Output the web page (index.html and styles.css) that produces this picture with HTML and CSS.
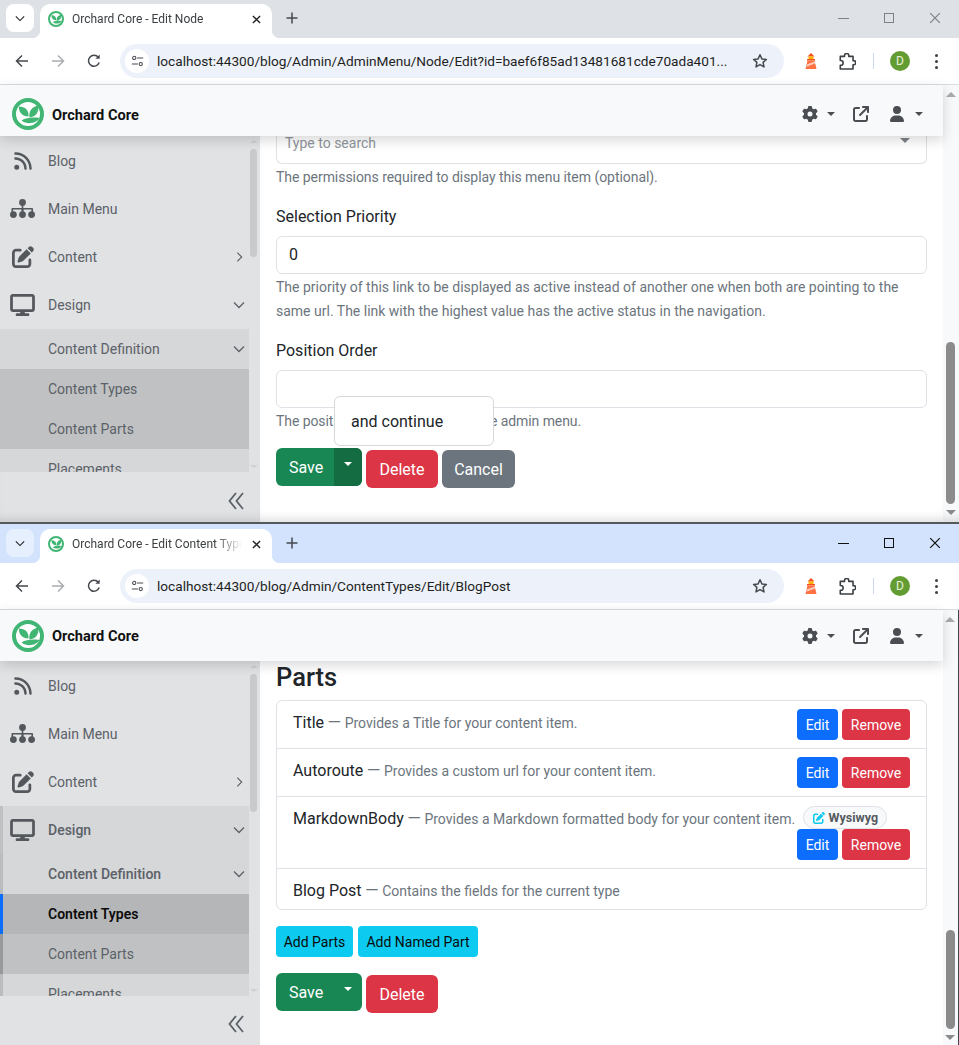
FILE: index.html
```html
<!DOCTYPE html>
<html lang="en">
<head>
<meta charset="utf-8">
<title>Orchard Core</title>
<link rel="stylesheet" href="styles.css">
</head>
<body>
<svg class="sprite" xmlns="http://www.w3.org/2000/svg">
  <symbol id="i-logo" viewBox="0 0 32 32">
    <circle cx="16" cy="16" r="14" fill="#fff" stroke="#41b574" stroke-width="4"/>
    <path fill="#41b574" d="M16.500 18.500C10 18.500 6.500 14 7 8.500c6 0 10 3.500 9.500 10z"/>
    <path fill="#41b574" d="M17.500 19.500C16.500 13 20 8.500 26.500 7.500c.5 6.500-2.500 11.500-9 12z"/>
    <path fill="#41b574" d="M9.500 22.500c4.500-3 11.500-3.500 18-2.500-3 5.500-12.500 7-18 2.500z"/>
  </symbol>
  <symbol id="i-rss" viewBox="0 0 448 512"><path d="M0 64C0 46.300 14.300 32 32 32c229.800 0 416 186.200 416 416c0 17.700-14.300 32-32 32s-32-14.300-32-32C384 253.600 226.400 96 32 96C14.300 96 0 81.700 0 64zM0 416a64 64 0 1 1 128 0A64 64 0 1 1 0 416zM32 160c159.100 0 288 128.900 288 288c0 17.700-14.300 32-32 32s-32-14.300-32-32c0-123.700-100.300-224-224-224c-17.700 0-32-14.300-32-32s14.300-32 32-32z"/></symbol>
  <symbol id="i-sitemap" viewBox="0 0 25 20">
    <circle cx="12.500" cy="3.500" r="3.400"/>
    <circle cx="3.400" cy="15.600" r="3.400"/><circle cx="12.500" cy="15.600" r="3.400"/><circle cx="21.600" cy="15.600" r="3.400"/>
    <path d="M11.700 6h1.600v3h8.700c.6 0 1 .4 1 1v3h-1.600v-2.400h-7.800V13h-2.200v-2.400H3.100V13H1.500v-3c0-.6.4-1 1-1h9.200z"/>
  </symbol>
  <symbol id="i-pen" viewBox="0 0 512 512"><path d="M471.600 21.700c-21.900-21.900-57.300-21.900-79.200 0L362.300 51.700l97.900 97.900 30.100-30.100c21.900-21.900 21.900-57.300 0-79.200L471.600 21.700zm-299.200 220c-6.100 6.100-10.800 13.600-13.500 21.900l-29.600 88.800c-2.900 8.600-.6 18.100 5.800 24.600s15.900 8.700 24.600 5.800l88.800-29.600c8.200-2.700 15.700-7.400 21.900-13.500L437.700 172.300 339.700 74.300 172.400 241.700zM96 64C43 64 0 107 0 160V416c0 53 43 96 96 96H352c53 0 96-43 96-96V320c0-17.700-14.300-32-32-32s-32 14.300-32 32v96c0 17.700-14.300 32-32 32H96c-17.700 0-32-14.300-32-32V160c0-17.700 14.300-32 32-32h96c17.700 0 32-14.300 32-32s-14.300-32-32-32H96z"/></symbol>
  <symbol id="i-desktop" viewBox="0 0 576 512"><path d="M64 0C28.700 0 0 28.700 0 64V352c0 35.300 28.700 64 64 64H240l-10.700 32H160c-17.700 0-32 14.300-32 32s14.300 32 32 32H416c17.700 0 32-14.300 32-32s-14.300-32-32-32H346.700L336 416H512c35.300 0 64-28.700 64-64V64c0-35.300-28.700-64-64-64H64zM512 64V352H64V64H512z"/></symbol>
  <symbol id="i-gear" viewBox="0 0 512 512"><path d="M495.900 166.600c3.200 8.700 .5 18.400-6.400 24.600l-43.300 39.400c1.100 8.300 1.700 16.800 1.700 25.400s-.6 17.100-1.700 25.400l43.300 39.400c6.900 6.200 9.600 15.900 6.400 24.600c-4.400 11.900-9.700 23.300-15.800 34.300l-4.700 8.100c-6.600 11-14 21.400-22.100 31.200c-5.900 7.200-15.700 9.600-24.500 6.800l-55.700-17.700c-13.400 10.300-28.200 18.900-44 25.400l-12.500 57.100c-2 9.100-9 16.300-18.200 17.800c-13.800 2.300-28 3.500-42.500 3.500s-28.700-1.200-42.500-3.500c-9.200-1.500-16.200-8.700-18.200-17.800l-12.500-57.100c-15.800-6.500-30.600-15.100-44-25.400L83.100 425.900c-8.800 2.800-18.600 .3-24.500-6.800c-8.100-9.800-15.500-20.200-22.100-31.200l-4.700-8.100c-6.100-11-11.400-22.400-15.800-34.300c-3.200-8.700-.5-18.400 6.400-24.600l43.300-39.400C64.600 273.100 64 264.600 64 256s.6-17.100 1.700-25.400L22.400 191.200c-6.900-6.200-9.600-15.900-6.400-24.600c4.400-11.900 9.700-23.300 15.800-34.300l4.700-8.100c6.600-11 14-21.400 22.100-31.200c5.900-7.200 15.700-9.600 24.500-6.800l55.700 17.700c13.400-10.300 28.200-18.900 44-25.400l12.500-57.100c2-9.100 9-16.300 18.200-17.800C227.300 1.200 241.500 0 256 0s28.700 1.200 42.500 3.500c9.200 1.500 16.200 8.700 18.200 17.800l12.500 57.100c15.800 6.500 30.600 15.100 44 25.400l55.700-17.700c8.800-2.800 18.600-.3 24.500 6.800c8.100 9.800 15.500 20.200 22.100 31.200l4.700 8.100c6.100 11 11.400 22.400 15.800 34.300zM256 336a80 80 0 1 0 0-160 80 80 0 1 0 0 160z"/></symbol>
  <symbol id="i-ext" viewBox="0 0 512 512"><path d="M320 0c-17.700 0-32 14.300-32 32s14.300 32 32 32h82.700L201.400 265.400c-12.500 12.500-12.500 32.800 0 45.300s32.800 12.500 45.300 0L448 109.300V192c0 17.700 14.300 32 32 32s32-14.300 32-32V32c0-17.700-14.300-32-32-32H320zM80 32C35.800 32 0 67.800 0 112V432c0 44.200 35.800 80 80 80H400c44.200 0 80-35.800 80-80V320c0-17.700-14.300-32-32-32s-32 14.300-32 32V432c0 8.800-7.200 16-16 16H80c-8.800 0-16-7.200-16-16V112c0-8.800 7.200-16 16-16H192c17.700 0 32-14.300 32-32s-14.300-32-32-32H80z"/></symbol>
  <symbol id="i-user" viewBox="0 0 448 512"><path d="M224 256A128 128 0 1 0 224 0a128 128 0 1 0 0 256zm-45.700 48C79.800 304 0 383.800 0 482.300C0 498.700 13.300 512 29.700 512H418.300c16.400 0 29.700-13.300 29.700-29.700C448 383.800 368.200 304 269.700 304H178.300z"/></symbol>
  <symbol id="i-down" viewBox="0 0 12 8"><path d="M1 1.500l5 5 5-5" fill="none" stroke="currentColor" stroke-width="1.300"/></symbol>
  <symbol id="i-right" viewBox="0 0 8 12"><path d="M1.500 1l5 5-5 5" fill="none" stroke="currentColor" stroke-width="1.300"/></symbol>
  <symbol id="i-collapse" viewBox="0 0 16 18"><path d="M8 1L1.500 9 8 17M15 1L8.500 9 15 17" fill="none" stroke="currentColor" stroke-width="1.800"/></symbol>
  <symbol id="i-back" viewBox="0 0 16 16"><path d="M14 8H2.500M8 2.500L2.500 8 8 13.500" fill="none" stroke="currentColor" stroke-width="1.500"/></symbol>
  <symbol id="i-fwd" viewBox="0 0 16 16"><path d="M2 8h11.500M8 2.500L13.500 8 8 13.500" fill="none" stroke="currentColor" stroke-width="1.500"/></symbol>
  <symbol id="i-reload" viewBox="0 0 16 16"><path d="M13.200 9.500A5.500 5.500 0 1 1 12.300 4.300" fill="none" stroke="currentColor" stroke-width="1.500"/><path d="M13.700 1.500v4.300H9.400z" fill="currentColor"/></symbol>
  <symbol id="i-tune" viewBox="0 0 16 14"><circle cx="4" cy="3.200" r="2" fill="none" stroke="currentColor" stroke-width="1.300"/><circle cx="12" cy="10.800" r="2" fill="none" stroke="currentColor" stroke-width="1.300"/><path d="M7.500 3.200H15M1 10.800h7.500" stroke="currentColor" stroke-width="1.300"/></symbol>
  <symbol id="i-star" viewBox="0 0 16 16"><path d="M8 1.800l1.900 4.100 4.500.5-3.300 3 .9 4.500L8 11.600 4 13.900l.9-4.500-3.300-3 4.500-.5z" fill="none" stroke="currentColor" stroke-width="1.500" stroke-linejoin="round"/></symbol>
  <symbol id="i-puzzle" viewBox="0 0 16 16"><path d="M1.200 3.200H5.200V2.400a2 2 0 0 1 4 0v.8h4v4h.6a1.900 1.900 0 0 1 0 3.800h-.6v4H1.200v-3.500h.5a2 2 0 0 0 0-4.400h-.5z" fill="none" stroke="currentColor" stroke-width="1.500" stroke-linejoin="round"/></symbol>
  <symbol id="i-lighthouse" viewBox="0 0 14 16">
    <path fill="#f4511e" d="M7 0l3.500 3.500h-7z"/>
    <path fill="#ffb300" d="M4.500 3.500h5V6h-5z"/>
    <path fill="#f4511e" d="M3 6h8v1.500H3z"/>
    <path fill="#ff7043" d="M3.500 7.500h7l2 8.500h-11z"/>
    <path fill="#ffccbc" d="M2.700 11.500l8-3 .5 2-8.800 3.300z"/>
  </symbol>
  <symbol id="i-close" viewBox="0 0 10 10"><path d="M1 1l8 8M9 1l-8 8" stroke="currentColor" fill="none"/></symbol>
  <symbol id="i-plus" viewBox="0 0 12 12"><path d="M6 .5v11M.5 6h11" stroke="currentColor" stroke-width="1.500" fill="none"/></symbol>
</svg>

<div class="window w1">
  <div class="tabstrip">
    <div class="tabmenu"><svg class="ico-10"><use href="#i-down"/></svg></div>
    <div class="tab">
      <svg class="favicon"><use href="#i-logo"/></svg>
      <span class="tab-title">Orchard Core - Edit Node</span>
      <svg class="tab-close"><use href="#i-close"/></svg>
    </div>
    <svg class="newtab"><use href="#i-plus"/></svg>
    <div class="winctl">
      <span class="ctl-min"></span>
      <span class="ctl-max"></span>
      <svg class="ctl-close"><use href="#i-close"/></svg>
    </div>
  </div>
  <div class="toolbar">
    <svg class="tb-ico"><use href="#i-back"/></svg>
    <svg class="tb-ico off"><use href="#i-fwd"/></svg>
    <svg class="tb-ico"><use href="#i-reload"/></svg>
    <div class="omnibox">
      <span class="site"><svg class="ico-tune"><use href="#i-tune"/></svg></span>
      <span class="url">localhost:44300/blog/Admin/AdminMenu/Node/Edit?id=baef6f85ad13481681cde70ada401...</span>
      <svg class="tb-star"><use href="#i-star"/></svg>
    </div>
    <svg class="ext-house"><use href="#i-lighthouse"/></svg>
    <svg class="ext-puzzle"><use href="#i-puzzle"/></svg>
    <span class="tb-sep"></span>
    <span class="avatar">D</span>
    <span class="kebab"><i></i><i></i><i></i></span>
  </div>
  <div class="app">
    <div class="page">
      <header class="navbar">
        <svg class="logo"><use href="#i-logo"/></svg>
        <span class="brand">Orchard Core</span>
        <div class="nav-tools">
          <svg class="nav-ico gear"><use href="#i-gear"/></svg><span class="caret dark"></span>
          <svg class="nav-ico ext"><use href="#i-ext"/></svg>
          <svg class="nav-ico user"><use href="#i-user"/></svg><span class="caret dark wide-gap"></span>
        </div>
      </header>
      <div class="body">
        <aside class="sidebar">
          <div class="side-scroll">
            <nav class="side-list">
              <a class="item"><svg class="item-ico rss"><use href="#i-rss"/></svg>Blog</a>
              <a class="item"><svg class="item-ico"><use href="#i-sitemap"/></svg>Main Menu</a>
              <a class="item"><svg class="item-ico pen"><use href="#i-pen"/></svg>Content<svg class="chev-r"><use href="#i-right"/></svg></a>
              <a class="item"><svg class="item-ico desk"><use href="#i-desktop"/></svg>Design<svg class="chev-d"><use href="#i-down"/></svg></a>
              <a class="sub sub1">Content Definition<svg class="chev-d"><use href="#i-down"/></svg></a>
              <a class="sub sub2">Content Types</a>
              <a class="sub sub2">Content Parts</a>
              <a class="sub sub1">Placements</a>
            </nav>
            <div class="side-track"><span class="arrow-up"></span><span class="side-thumb"></span><span class="arrow-down"></span></div>
          </div>
          <div class="side-foot"><svg class="collapse"><use href="#i-collapse"/></svg></div>
        </aside>
        <main class="main">
          <div class="select-rest"><span class="ph">Type to search</span><span class="caret select-caret"></span></div>
          <p class="help tight">The permissions required to display this menu item (optional).</p>
          <label class="label">Selection Priority</label>
          <div class="input">0</div>
          <p class="help">The priority of this link to be displayed as active instead of another one when both are pointing to the same url. The link with the highest value has the active status in the navigation.</p>
          <label class="label">Position Order</label>
          <div class="input"></div>
          <p class="help tighter">The position of the menu item in the admin menu.</p>
          <div class="actions">
            <div class="split"><span class="split-main">Save</span><span class="split-tog active"><span class="caret light"></span></span></div>
            <span class="btn danger">Delete</span>
            <span class="btn secondary">Cancel</span>
          </div>
          <div class="popup">and continue</div>
        </main>
      </div>
    </div>
    <div class="vscroll"><span class="arrow-up big"></span><span class="v-thumb"></span><span class="arrow-down big"></span></div>
  </div>
</div>

<div class="window w2">
  <div class="tabstrip">
    <div class="tabmenu"><svg class="ico-10"><use href="#i-down"/></svg></div>
    <div class="tab">
      <svg class="favicon"><use href="#i-logo"/></svg>
      <span class="tab-title">Orchard Core - Edit Content Type</span>
      <svg class="tab-close"><use href="#i-close"/></svg>
    </div>
    <svg class="newtab"><use href="#i-plus"/></svg>
    <div class="winctl">
      <span class="ctl-min"></span>
      <span class="ctl-max"></span>
      <svg class="ctl-close"><use href="#i-close"/></svg>
    </div>
  </div>
  <div class="toolbar">
    <svg class="tb-ico"><use href="#i-back"/></svg>
    <svg class="tb-ico off"><use href="#i-fwd"/></svg>
    <svg class="tb-ico"><use href="#i-reload"/></svg>
    <div class="omnibox">
      <span class="site"><svg class="ico-tune"><use href="#i-tune"/></svg></span>
      <span class="url">localhost:44300/blog/Admin/ContentTypes/Edit/BlogPost</span>
      <svg class="tb-star"><use href="#i-star"/></svg>
    </div>
    <svg class="ext-house"><use href="#i-lighthouse"/></svg>
    <svg class="ext-puzzle"><use href="#i-puzzle"/></svg>
    <span class="tb-sep"></span>
    <span class="avatar">D</span>
    <span class="kebab"><i></i><i></i><i></i></span>
  </div>
  <div class="app">
    <div class="page">
      <header class="navbar">
        <svg class="logo"><use href="#i-logo"/></svg>
        <span class="brand">Orchard Core</span>
        <div class="nav-tools">
          <svg class="nav-ico gear"><use href="#i-gear"/></svg><span class="caret dark"></span>
          <svg class="nav-ico ext"><use href="#i-ext"/></svg>
          <svg class="nav-ico user"><use href="#i-user"/></svg><span class="caret dark wide-gap"></span>
        </div>
      </header>
      <div class="body">
        <aside class="sidebar">
          <div class="side-scroll">
            <nav class="side-list">
              <a class="item"><svg class="item-ico rss"><use href="#i-rss"/></svg>Blog</a>
              <a class="item"><svg class="item-ico"><use href="#i-sitemap"/></svg>Main Menu</a>
              <a class="item"><svg class="item-ico pen"><use href="#i-pen"/></svg>Content<svg class="chev-r"><use href="#i-right"/></svg></a>
              <a class="item open"><svg class="item-ico desk"><use href="#i-desktop"/></svg>Design<svg class="chev-d"><use href="#i-down"/></svg></a>
              <a class="sub sub1 open strong">Content Definition<svg class="chev-d"><use href="#i-down"/></svg></a>
              <a class="sub current">Content Types</a>
              <a class="sub sub2 open2">Content Parts</a>
              <a class="sub sub1 open">Placements</a>
            </nav>
            <div class="side-track"><span class="arrow-up"></span><span class="side-thumb"></span><span class="arrow-down"></span></div>
          </div>
          <div class="side-foot"><svg class="collapse"><use href="#i-collapse"/></svg></div>
        </aside>
        <main class="main">
          <h2 class="title">Parts</h2>
          <ul class="parts">
            <li class="part">
              <div class="part-text"><span class="part-name">Title</span> <span class="dash">—</span> Provides a Title for your content item.</div>
              <div class="part-btns"><span class="btn-sm primary edit">Edit</span><span class="btn-sm danger remove">Remove</span></div>
            </li>
            <li class="part">
              <div class="part-text"><span class="part-name">Autoroute</span> <span class="dash">—</span> Provides a custom url for your content item.</div>
              <div class="part-btns"><span class="btn-sm primary edit">Edit</span><span class="btn-sm danger remove">Remove</span></div>
            </li>
            <li class="part">
              <div class="part-text"><span class="part-name">MarkdownBody</span> <span class="dash">—</span> Provides a Markdown formatted body for your content item. <span class="chip"><svg class="chip-ico"><use href="#i-pen"/></svg>Wysiwyg</span></div>
              <div class="part-btns"><span class="btn-sm primary edit">Edit</span><span class="btn-sm danger remove">Remove</span></div>
            </li>
            <li class="part">
              <div class="part-text"><span class="part-name">Blog Post</span> <span class="dash">—</span> Contains the fields for the current type</div>
            </li>
          </ul>
          <div class="adders"><span class="btn-sm info add1">Add Parts</span><span class="btn-sm info add2">Add Named Part</span></div>
          <div class="actions">
            <div class="split"><span class="split-main">Save</span><span class="split-tog"><span class="caret light"></span></span></div>
            <span class="btn danger">Delete</span>
          </div>
        </main>
      </div>
    </div>
    <div class="vscroll"><span class="arrow-up big"></span><span class="v-thumb"></span><span class="arrow-down big"></span></div>
  </div>
</div>
</body>
</html>
```

FILE: styles.css
```css
* { box-sizing: border-box; }
html, body { margin: 0; padding: 0; }
body {
  width: 959px;
  height: 1045px;
  overflow: hidden;
  background: #fff;
  font-family: Roboto, "Liberation Sans", sans-serif;
  font-size: 14px;
  color: #212529;
}
.sprite { display: none; }
p, h2, ul { margin: 0; padding: 0; }
li { list-style: none; }
svg { display: block; fill: currentColor; flex: none; }

/* windows */
.window { display: flex; flex-direction: column; overflow: hidden; }
.w1 { height: 524px; border-bottom: 2px solid #55585c; --strip: #dee1e6; --menu: #fff; --ctl: #7d8186; }
.w2 { height: 521px; --strip: #d3e3fd; --menu: #e6effd; --ctl: #111; }

/* tab strip */
.tabstrip {
  display: flex;
  align-items: flex-start;
  flex: none;
  height: 38px;
  padding: 4px 0 0 6px;
  background: var(--strip);
  color: #45494e;
}
.w2 .tabstrip { height: 39px; padding-top: 5px; }
.tabmenu {
  display: flex;
  align-items: center;
  justify-content: center;
  width: 28px;
  height: 28px;
  border-radius: 8px;
  background: var(--menu);
  color: #222;
}
.ico-10 { width: 10px; height: 7px; }
.tab {
  position: relative;
  display: flex;
  align-items: center;
  width: 232px;
  height: 34px;
  margin-left: 6px;
  padding: 0 11px 4px 8px;
  border-radius: 10px 10px 0 0;
  background: #fff;
}
.tab::before, .tab::after {
  content: "";
  position: absolute;
  bottom: 0;
  width: 8px;
  height: 8px;
}
.tab::before { left: -8px; background: radial-gradient(circle at 0 0, transparent 8px, #fff 8.5px); }
.tab::after { right: -8px; background: radial-gradient(circle at 100% 0, transparent 8px, #fff 8.5px); }
.favicon { width: 16px; height: 16px; }
.tab-title {
  flex: 1;
  min-width: 0;
  margin: 0 10px 0 8px;
  overflow: hidden;
  white-space: nowrap;
  font-size: 12px;
  color: #3c4043;
  -webkit-mask-image: linear-gradient(to right, #000 84%, transparent 100%);
  mask-image: linear-gradient(to right, #000 84%, transparent 100%);
}
.tab-close { width: 9px; height: 9px; color: #222; stroke-width: 1.5; }
.newtab { width: 12px; height: 12px; margin: 8px 0 0 14px; color: #45494e; }
.winctl {
  display: flex;
  align-items: center;
  height: 28px;
  margin-left: auto;
  padding-right: 18px;
  color: var(--ctl);
}
.ctl-min { width: 11px; height: 1px; background: var(--ctl); }
.ctl-max { width: 10px; height: 10px; margin-left: 35px; border: 1px solid var(--ctl); }
.ctl-close { width: 12px; height: 12px; margin-left: 35px; }

/* toolbar */
.toolbar {
  display: flex;
  align-items: center;
  flex: none;
  height: 47px;
  padding: 0 0 0 14px;
  border-bottom: 1px solid #dadce0;
  border-radius: 8px 8px 0 0;
  background: #fff;
  color: #45494e;
}
.tb-ico { width: 16px; height: 16px; margin-right: 20px; }
.tb-ico.off { color: #aaadb1; }
.omnibox {
  display: flex;
  align-items: center;
  width: 664px;
  height: 34px;
  margin-left: -2px;
  padding: 0 16px 0 5px;
  border-radius: 17px;
  background: #edf2fa;
}
.site {
  display: flex;
  align-items: center;
  justify-content: center;
  width: 24px;
  height: 24px;
  border-radius: 50%;
  background: #fff;
}
.ico-tune { width: 13px; height: 12px; }
.url { flex: 1; margin-left: 8px; font-size: 13.65px; white-space: nowrap; overflow: hidden; color: #1f1f1f; }
.tb-star { width: 16px; height: 16px; color: #45494e; }
.ext-house { width: 14px; height: 16px; margin-left: 20px; }
.ext-puzzle { width: 17px; height: 17px; margin-left: 21px; color: #3c4043; }
.tb-sep { width: 1px; height: 16px; margin-left: 17px; background: #c9d8f3; }
.avatar {
  display: flex;
  align-items: center;
  justify-content: center;
  width: 20px;
  height: 20px;
  margin-left: 16px;
  border-radius: 50%;
  background: #649c34;
  color: #e8f2dd;
  font-size: 12px;
}
.kebab { display: flex; flex-direction: column; gap: 3px; margin-left: 25px; }
.kebab i { display: block; width: 3px; height: 3px; border-radius: 50%; background: #3c4043; }

/* app shell */
.app { display: flex; flex: 1; min-height: 0; }
.page { display: flex; flex-direction: column; flex: 1; min-width: 0; }
.navbar {
  position: relative;
  z-index: 2;
  display: flex;
  align-items: center;
  flex: none;
  height: 51px;
  padding: 0 20px 0 12px;
  background: #f8f9fa;
  box-shadow: 0 4px 12px rgba(0, 0, 0, .16);
}
.w1 .navbar { padding-top: 7px; }
.logo { width: 32px; height: 32px; }
.brand { margin-left: 8px; font-size: 14.6px; font-weight: 700; color: #111; }
.w1 .brand { margin-top: 2px; }
.nav-tools { display: flex; align-items: center; margin-left: auto; color: #4a4e52; }
.nav-ico { height: 16px; }
.gear { width: 16px; }
.ext { width: 16px; margin-left: 18px; }
.user { width: 16px; margin-left: 20px; }
.caret {
  display: block;
  width: 0;
  height: 0;
  border-left: 4.5px solid transparent;
  border-right: 4.5px solid transparent;
  border-top: 4.5px solid currentColor;
}
.nav-tools .caret { margin-left: 9px; }
.nav-tools .wide-gap { margin-left: 10px; }
.body { display: flex; flex: 1; min-height: 0; }

/* sidebar */
.sidebar {
  display: flex;
  flex-direction: column;
  flex: none;
  width: 260px;
  background: #e1e2e4;
}
.side-scroll { display: flex; flex: 1; min-height: 0; }
.side-list { flex: none; width: 249px; padding-top: 1px; overflow: hidden; }
.item, .sub {
  display: flex;
  align-items: center;
  color: #5b6168;
  font-size: 14px;
}
.item { position: relative; height: 48px; padding: 0 4px 0 10px; }
.item-ico { width: 25px; height: 20px; margin-right: 13px; color: #54585d; }
.desk { height: 22px; }
.rss { width: 20px; height: 20px; margin: 0 15px 0 3px; }
.pen { width: 22px; height: 22px; margin: 0 14px 0 2px; }
.sub { height: 40px; padding: 0 4px 0 48px; }
.sub1 { background: #d6d7d8; }
.sub2 { background: #c0c1c2; }
.chev-r { width: 7px; height: 12px; margin-left: auto; margin-right: 2px; color: #5b6168; }
.chev-d { width: 12px; height: 8px; margin-left: auto; color: #5b6168; }
.item.open { padding-left: 7px; border-left: 3px solid #bfc0c1; background: #d6d7d8; font-weight: 500; }
.sub.open { padding-left: 45px; border-left: 3px solid #bbbcbd; }
.strong { font-weight: 500; }
.sub.open2 { padding-left: 45px; border-left: 3px solid #98999a; }
.current { padding-left: 45px; border-left: 3px solid #0d6efd; background: #b5b6b7; color: #0b0b0b; font-weight: 600; }
.side-track { display: flex; flex-direction: column; align-items: center; flex: 1; padding: 4px 2px 4px 0; }
.arrow-up, .arrow-down {
  display: block;
  flex: none;
  width: 0;
  height: 0;
  border-left: 4px solid transparent;
  border-right: 4px solid transparent;
}
.arrow-up { border-bottom: 3px solid #cfd0d2; }
.arrow-down { margin-top: auto; border-top: 3px solid #cfd0d2; }
.side-thumb { flex: none; width: 7px; margin-top: 6px; border-radius: 4px; background: #c9cacb; }
.w1 .side-thumb { height: 108px; }
.w2 .side-thumb { height: 138px; }
.side-foot {
  display: flex;
  align-items: center;
  justify-content: flex-end;
  flex: none;
  height: 50px;
  padding: 7px 16px 0 0;
  color: #5b6168;
}
.w2 .side-foot { height: 49px; }
.collapse { width: 16px; height: 18px; }

/* main */
.main { position: relative; flex: 1; min-width: 0; padding: 0 16px; background: #fff; overflow: hidden; }
.select-rest {
  display: flex;
  justify-content: space-between;
  height: 28px;
  padding: 0 16px 0 8px;
  border: 1px solid #dee2e6;
  border-top: 0;
  border-radius: 0 0 6px 6px;
  color: #9a9fa5;
  font-size: 14px;
  line-height: 14px;
}
.ph { color: #8f959b; }
.select-caret { margin-top: 2px; border-left-width: 5px; border-right-width: 5px; border-top-width: 5px; color: #7f8489; }
.help { padding-top: 1px; margin-bottom: 15px; font-size: 14px; line-height: 24px; color: #6c757d; }
.tight { letter-spacing: -.05px; }
.tighter { letter-spacing: -.08px; }
.label { display: block; height: 24px; margin-bottom: 8px; font-size: 16px; line-height: 26px; color: #212529; }
.input {
  height: 38px;
  padding: 0 12px;
  border: 1px solid #dee2e6;
  border-radius: 6px;
  font-size: 16px;
  line-height: 36px;
  color: #212529;
}
.actions { display: flex; align-items: flex-start; gap: 4px; }
.split { display: flex; width: 86px; height: 38px; border-radius: 6px; overflow: hidden; background: #198754; color: #fff; font-size: 16px; }
.split-main { flex: 1; padding-left: 13px; line-height: 40px; }
.split-tog { display: flex; align-items: center; justify-content: center; width: 28px; padding-bottom: 6px; }
.split-tog.active { background: #146c43; }
.caret.light { color: #fff; }
.btn {
  display: block;
  height: 38px;
  margin-top: 2px;
  border-radius: 6px;
  font-size: 16px;
  line-height: 40px;
  text-align: center;
  color: #fff;
}
.danger { width: 72px; background: #dc3545; color: #fff; }
.secondary { width: 73px; background: #6c757d; }
.popup {
  position: absolute;
  top: 260px;
  left: 74px;
  width: 160px;
  height: 50px;
  padding-left: 16px;
  border: 1px solid #d6d8da;
  border-radius: 6px;
  background: #fff;
  font-size: 16px;
  line-height: 50px;
  color: #212529;
}

/* parts */
.title { height: 39px; font-size: 25.5px; font-weight: 500; line-height: 32px; color: #212529; }
.parts { border: 1px solid #dee2e6; border-radius: 6px; }
.part {
  display: flex;
  flex-wrap: wrap;
  padding: 8px 16px;
  border-top: 1px solid #dee2e6;
  font-size: 14px;
  color: #6c757d;
}
.part:first-child { border-top: 0; }
.part-text { height: 24px; padding-top: 2px; line-height: 24px; white-space: nowrap; }
.part-name { font-size: 16px; color: #212529; }
.dash { font-size: 17.5px; line-height: 20px; }
.part-btns { display: flex; gap: 4px; margin-left: auto; }
.btn-sm {
  display: block;
  height: 31px;
  border-radius: 4px;
  font-size: 14px;
  line-height: 32px;
  text-align: center;
  color: #fff;
}
.primary { background: #0d6efd; }
.edit { width: 41px; }
.remove { width: 68px; background: #dc3545; }
.chip {
  display: inline-flex;
  align-items: center;
  height: 23px;
  margin: -1px 0 0 4px;
  padding: 0 8px 0 9px;
  border: 1px solid #dee2e6;
  border-radius: 12px;
  background: #f8f9fa;
  font-size: 12.5px;
  font-weight: 700;
  color: #555a60;
  vertical-align: top;
}
.chip-ico { width: 12px; height: 12px; margin-right: 4px; color: #0dcaf0; }
.adders { display: flex; gap: 5px; margin: 16px 0; }
.info { background: #0dcaf0; color: #0a0a0a; }
.add1 { width: 77px; }
.add2 { width: 120px; }

/* page scrollbar */
.vscroll {
  display: flex;
  flex-direction: column;
  align-items: center;
  flex: none;
  width: 16px;
  padding: 7px 2px 7px 1px;
  background: #f8f9fb;
}
.w2 .vscroll { padding-bottom: 5px; border-right: 1px solid #3d4450; }
.arrow-up.big, .arrow-down.big { border-left-width: 5px; border-right-width: 5px; }
.arrow-up.big { border-bottom: 5px solid #a9aaac; }
.arrow-down.big { border-top: 5px solid #8b8b8b; }
.v-thumb { flex: none; width: 9px; border-radius: 5px; background: #8b8b8b; }
.w1 .v-thumb { height: 162px; margin-top: 245px; }
.w2 .v-thumb { height: 99px; margin-top: 308px; }

/* fade at the bottom of the upper window */
.w1 .main, .w1 .vscroll { box-shadow: inset 0 -10px 8px -6px rgba(0, 0, 0, .12); }
.w1 .side-foot { box-shadow: inset 0 -10px 8px -6px rgba(0, 0, 0, .1); }
```
